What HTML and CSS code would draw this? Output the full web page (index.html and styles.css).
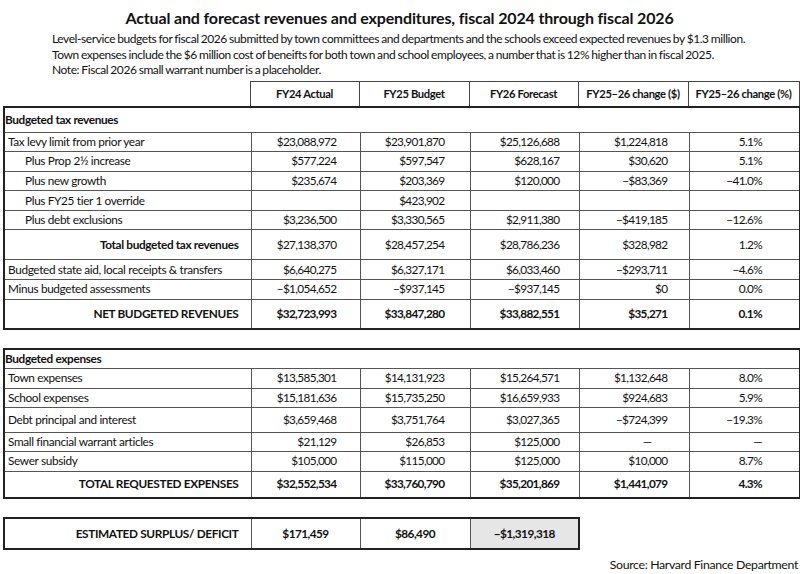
FILE: index.html
```html
<!DOCTYPE html>
<html>
<head>
<meta charset="utf-8">
<link rel="stylesheet" href="styles.css">
</head>
<body>
<div class="page">
  <h1 class="title">Actual and forecast revenues and expenditures, fiscal 2024 through fiscal 2026</h1>
  <div class="intro">
    <p>Level-service budgets for fiscal 2026 submitted by town committees and departments and the schools exceed expected revenues by $1.3 million.</p>
    <p>Town expenses include the $6 million cost of beneifts for both town and school employees, a number that is 12% higher than in fiscal 2025.</p>
    <p>Note: Fiscal 2026 small warrant number is a placeholder.</p>
  </div>

  <table class="grid head">
    <colgroup><col class="c0"><col class="c1"><col class="c2"><col class="c3"><col class="c4"><col class="c5"></colgroup>
    <tr>
      <td class="blank"></td>
      <th>FY24 Actual</th>
      <th>FY25 Budget</th>
      <th>FY26 Forecast</th>
      <th>FY25–26 change ($)</th>
      <th>FY25–26 change (%)</th>
    </tr>
  </table>

  <table class="grid box t1">
    <colgroup><col class="c0"><col class="c1"><col class="c2"><col class="c3"><col class="c4"><col class="c5"></colgroup>
    <tr class="sec big"><td colspan="6">Budgeted tax revenues</td></tr>
    <tr><td class="lbl">Tax levy limit from prior year</td><td class="n1">$23,088,972</td><td class="n2">$23,901,870</td><td class="n3">$25,126,688</td><td class="n4">$1,224,818</td><td class="n5">5.1%</td></tr>
    <tr><td class="lbl ind">Plus Prop 2½ increase</td><td class="n1">$577,224</td><td class="n2">$597,547</td><td class="n3">$628,167</td><td class="n4">$30,620</td><td class="n5">5.1%</td></tr>
    <tr><td class="lbl ind">Plus new growth</td><td class="n1">$235,674</td><td class="n2">$203,369</td><td class="n3">$120,000</td><td class="n4">−$83,369</td><td class="n5">−41.0%</td></tr>
    <tr><td class="lbl ind">Plus FY25 tier 1 override</td><td class="n1"></td><td class="n2">$423,902</td><td class="n3"></td><td class="n4"></td><td class="n5"></td></tr>
    <tr><td class="lbl ind">Plus debt exclusions</td><td class="n1">$3,236,500</td><td class="n2">$3,330,565</td><td class="n3">$2,911,380</td><td class="n4">−$419,185</td><td class="n5">−12.6%</td></tr>
    <tr class="tot"><td class="lbl sub">Total budgeted tax revenues</td><td class="n1">$27,138,370</td><td class="n2">$28,457,254</td><td class="n3">$28,786,236</td><td class="n4">$328,982</td><td class="n5">1.2%</td></tr>
    <tr><td class="lbl">Budgeted state aid, local receipts &amp; transfers</td><td class="n1">$6,640,275</td><td class="n2">$6,327,171</td><td class="n3">$6,033,460</td><td class="n4">−$293,711</td><td class="n5">−4.6%</td></tr>
    <tr><td class="lbl">Minus budgeted assessments</td><td class="n1">−$1,054,652</td><td class="n2">−$937,145</td><td class="n3">−$937,145</td><td class="n4">$0</td><td class="n5">0.0%</td></tr>
    <tr class="tot strong"><td class="lbl sub">NET BUDGETED REVENUES</td><td class="n1">$32,723,993</td><td class="n2">$33,847,280</td><td class="n3">$33,882,551</td><td class="n4">$35,271</td><td class="n5">0.1%</td></tr>
  </table>

  <table class="grid box t2">
    <colgroup><col class="c0"><col class="c1"><col class="c2"><col class="c3"><col class="c4"><col class="c5"></colgroup>
    <tr class="sec"><td colspan="6">Budgeted expenses</td></tr>
    <tr><td class="lbl">Town expenses</td><td class="n1">$13,585,301</td><td class="n2">$14,131,923</td><td class="n3">$15,264,571</td><td class="n4">$1,132,648</td><td class="n5">8.0%</td></tr>
    <tr><td class="lbl">School expenses</td><td class="n1">$15,181,636</td><td class="n2">$15,735,250</td><td class="n3">$16,659,933</td><td class="n4">$924,683</td><td class="n5">5.9%</td></tr>
    <tr class="mid"><td class="lbl">Debt principal and interest</td><td class="n1">$3,659,468</td><td class="n2">$3,751,764</td><td class="n3">$3,027,365</td><td class="n4">−$724,399</td><td class="n5">−19.3%</td></tr>
    <tr><td class="lbl">Small financial warrant articles</td><td class="n1">$21,129</td><td class="n2">$26,853</td><td class="n3">$125,000</td><td class="n4 dash">—</td><td class="n5">—</td></tr>
    <tr><td class="lbl">Sewer subsidy</td><td class="n1">$105,000</td><td class="n2">$115,000</td><td class="n3">$125,000</td><td class="n4">$10,000</td><td class="n5">8.7%</td></tr>
    <tr class="tot2 strong"><td class="lbl sub">TOTAL REQUESTED EXPENSES</td><td class="n1">$32,552,534</td><td class="n2">$33,760,790</td><td class="n3">$35,201,869</td><td class="n4">$1,441,079</td><td class="n5">4.3%</td></tr>
  </table>

  <table class="grid box t3">
    <colgroup><col class="c0"><col class="c1"><col class="c2"><col class="c3"></colgroup>
    <tr class="strong"><td class="lbl sub">ESTIMATED SURPLUS/ DEFICIT</td><td class="ctr">$171,459</td><td class="ctr">$86,490</td><td class="ctr shade">−$1,319,318</td></tr>
  </table>

  <p class="source">Source: Harvard Finance Department</p>
</div>
</body>
</html>
```

FILE: styles.css
```css
html, body {
  margin: 0;
  padding: 0;
  background: #fff;
}
body {
  font-family: Lato, "Open Sans", sans-serif;
  color: #111;
}
.page {
  width: 796px;
  padding: 0 0 0 3px;
}
.title {
  margin: 0;
  padding-top: 8px;
  height: 21px;
  font-size: 16px;
  letter-spacing: -0.15px;
  font-weight: 700;
  text-align: center;
  line-height: 20px;
  padding-right: 3px;
}
.intro {
  padding-left: 49px;
  margin-top: 2px;
  font-size: 12px;
  letter-spacing: -0.42px;
  word-spacing: -0.5px;
  line-height: 15.5px;
  white-space: nowrap;
}
.intro p {
  margin: 0;
}
.grid {
  border-collapse: collapse;
  table-layout: fixed;
  width: 796px;
  font-size: 11.8px;
  letter-spacing: -0.35px;
}
.c0 { width: 247px; }
.c1 { width: 109px; }
.c2 { width: 110px; }
.c3 { width: 109px; }
.c4 { width: 110px; }
.c5 { width: 111px; }
.head {
  margin-top: 3px;
}
.head tr { height: 25px; }
.head th {
  padding: 0;
  border: 1px solid #444;
  border-bottom: none;
  font-weight: 700;
  font-size: 11.2px;
  text-align: center;
}
.head .blank {
  border: none;
}
.box {
  border: 2px solid #222;
}
.box tr { height: 19.6px; }
.box td {
  border: 1px solid #555;
  padding: 0;
  line-height: 14px;
  white-space: nowrap;
}
.box .sec td {
  font-weight: 700;
}
.box tr.sec { height: 19.5px; }
.box tr.sec.big { height: 25px; }
.lbl { padding-left: 3px !important; }
.lbl.ind { padding-left: 20px !important; }
.lbl.sub {
  text-align: right;
  font-weight: 700;
  padding-right: 12px;
}
.box tr.tot { height: 30px; }
.t2 tr { height: 19.5px; }
.box tr.tot2 { height: 27px; }
.box tr.mid { height: 24.5px; }
.strong td { font-weight: 700; }
.n1, .n2, .n3, .n4, .n5 {
  text-align: right;
  letter-spacing: -0.65px;
}
.n1 { padding-right: 23px !important; }
.n2 { padding-right: 25px !important; }
.n3 { padding-right: 19px !important; }
.n4 { padding-right: 21px !important; }
.n4.dash { padding-right: 37px !important; }
.n5 { padding-right: 37px !important; }
.t2 { margin-top: 18px; }
.t3 {
  margin-top: 18px;
  width: 575px;
}
.box.t3 tr { height: 31px; }
.ctr { text-align: center; letter-spacing: -0.55px; }
.shade { background: #e6e6e6; }
.source {
  margin: 7px 0 0 0;
  text-align: right;
  font-size: 12.3px;
  letter-spacing: -0.35px;
  padding-right: 1px;
}
```
